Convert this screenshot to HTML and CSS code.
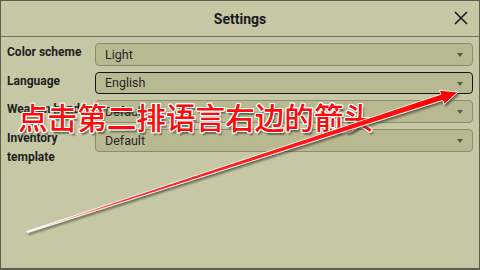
FILE: index.html
```html
<!DOCTYPE html>
<html lang="en">
<head>
  <meta charset="UTF-8">
  <title>Settings</title>
  <link rel="stylesheet" href="styles.css">
</head>
<body>
  <div class="dialog">
    <header class="bar">
      <h1>Settings</h1>
      <button class="close" aria-label="Close">
        <svg width="14" height="14" viewBox="0 0 14 14"><path d="M1 1L13 13M13 1L1 13" stroke="#1a1a1a" stroke-width="1.6" fill="none"/></svg>
      </button>
    </header>
    <main class="form">
      <label class="label">Color scheme</label>
      <div class="select">Light</div>
      <label class="label">Language</label>
      <div class="select active">English</div>
      <label class="label">Weapon hand</label>
      <div class="select">Default</div>
      <label class="label">Inventory template</label>
      <div class="select">Default</div>
    </main>

    <!-- annotation drawn over the screenshot -->
    <div class="note">点击第二排语言右边的箭头</div>
    <svg class="pointer" width="480" height="270" viewBox="0 0 480 270">
      <defs>
        <linearGradient id="fade" x1="27" y1="232" x2="458" y2="92" gradientUnits="userSpaceOnUse">
          <stop offset="0" stop-color="#ffffff"/>
          <stop offset="0.22" stop-color="#ff3030"/>
          <stop offset="1" stop-color="#ff0000"/>
        </linearGradient>
        <filter id="shade" x="-10%" y="-10%" width="120%" height="130%">
          <feDropShadow dx="1.5" dy="2" stdDeviation="1" flood-color="#3a3a2a" flood-opacity="0.7"/>
        </filter>
      </defs>
      <polygon filter="url(#shade)" fill="url(#fade)" stroke="#fff" stroke-width="0.9" stroke-linejoin="round"
        points="26.8,231.4 440.8,94.3 439.4,90.2 458,92 444.2,104.4 442.8,100.3 27.2,232.6"/>
    </svg>
  </div>
</body>
</html>
```

FILE: styles.css
```css
html, body {
  margin: 0;
  padding: 0;
}
body {
  font-family: Roboto, 'Noto Sans', Arial, sans-serif;
  background: #c6c8a5;
  color: #1b1b1b;
}
.dialog {
  position: relative;
  width: 480px;
  height: 270px;
  box-sizing: border-box;
  border: 1px solid #5c5e50;
  border-bottom-width: 2px;
  background: #c6c8a5;
  overflow: hidden;
}
.bar {
  height: 35px;
  border-bottom: 1px solid #6e705f;
  display: flex;
  align-items: center;
  justify-content: center;
  position: relative;
}
.bar h1 {
  margin: 0;
  font-size: 14px;
  font-weight: 700;
  color: #1a1a1a;
}
.close {
  position: absolute;
  right: 11px;
  top: 10px;
  background: none;
  border: none;
  padding: 0;
  width: 14px;
  height: 14px;
  display: flex;
}
.form {
  display: grid;
  grid-template-columns: 88px 1fr;
  row-gap: 6px;
  padding: 6px 6px 0 6px;
}
.label {
  font-size: 12px;
  font-weight: 700;
  line-height: 19px;
  color: #1e1e1e;
  padding-right: 6px;
}
.select {
  position: relative;
  height: 21px;
  border: 1px solid #8b8c6f;
  border-radius: 4px;
  background: #b9b991;
  font-size: 12.5px;
  line-height: 21px;
  padding-left: 9px;
  color: #262626;
}
.select::after {
  content: "";
  position: absolute;
  right: 9px;
  top: 9px;
  border-left: 3.5px solid transparent;
  border-right: 3.5px solid transparent;
  border-top: 4px solid #55574a;
}
.select.active {
  border: 1.5px solid #141414;
  height: 20px;
  line-height: 20px;
}
.note {
  position: absolute;
  left: 17px;
  top: 100px;
  font-family: 'Noto Sans CJK SC', sans-serif;
  font-size: 29.6px;
  font-weight: 500;
  line-height: 32px;
  color: #ff0a0a;
  white-space: nowrap;
  text-shadow:
    1px 0 0 #fff, -1px 0 0 #fff, 0 1px 0 #fff, 0 -1px 0 #fff,
    1px 1px 0 #fff, -1px -1px 0 #fff, 1px -1px 0 #fff, -1px 1px 0 #fff,
    2px 2.5px 1.5px rgba(50, 50, 40, 0.6);
}
.pointer {
  position: absolute;
  left: -1px;
  top: -1px;
}
```
